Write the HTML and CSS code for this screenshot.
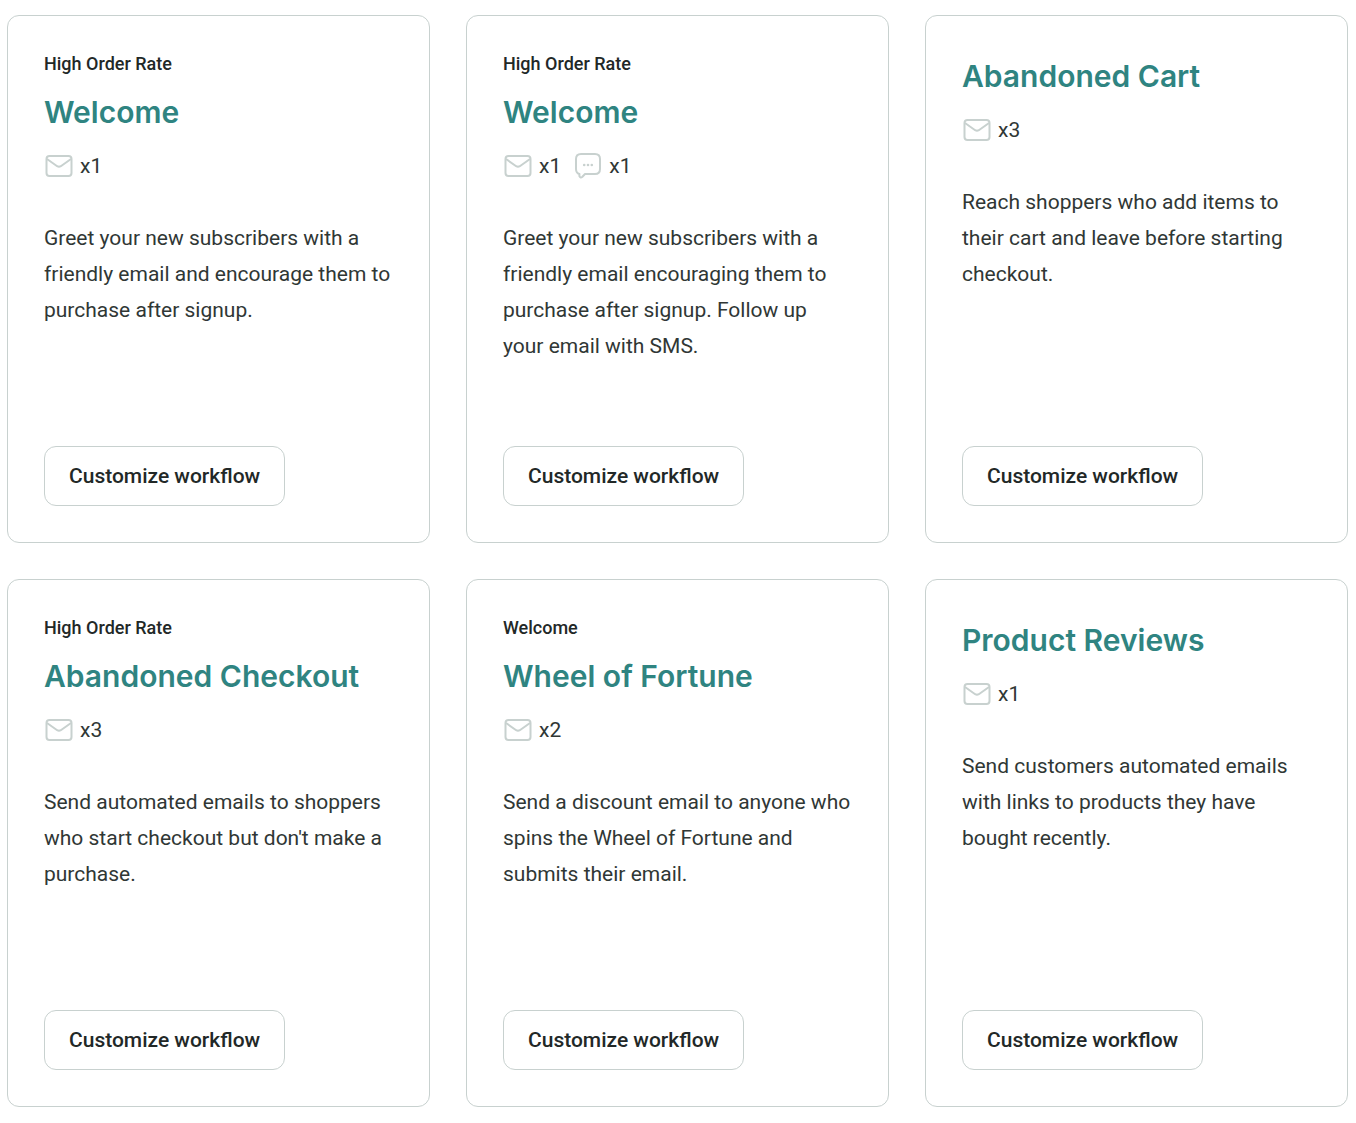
FILE: index.html
```html
<!DOCTYPE html>
<html lang="en">
<head>
    <meta charset="UTF-8">
    <meta name="viewport" content="width=device-width, initial-scale=1.0">
    <title>Workflows</title>
    <link rel="stylesheet" href="styles.css">
</head>
<body>
    <!-- shared icons -->
    <svg class="icon-defs" aria-hidden="true">
        <symbol id="icon-email" viewBox="0 0 30 30">
            <rect x="2.5" y="5" width="25" height="20" rx="3"/>
            <path d="M3 8 L13.2 15.2 Q15 16.4 16.8 15.2 L27 8"/>
        </symbol>
        <symbol id="icon-sms" viewBox="0 0 30 30">
            <path d="M8 3 H22 Q27 3 27 8 V18 Q27 23 22 23 H12 L9.4 25.8 Q7.4 27.6 6.4 25.2 V23 Q3 22 3 18 V8 Q3 3 8 3 Z"/>
            <g class="dots">
                <circle cx="11.2" cy="14" r="1.3"/>
                <circle cx="15" cy="14" r="1.3"/>
                <circle cx="18.8" cy="14" r="1.3"/>
            </g>
        </symbol>
    </svg>

    <main class="workflows">
        <article class="card">
            <div class="tag">High Order Rate</div>
            <h2>Welcome</h2>
            <div class="channels">
                <span class="channel"><svg class="icon" role="img" aria-label="Email"><use href="#icon-email"/></svg>x1</span>
            </div>
            <p>Greet your new subscribers with a friendly email and encourage them to purchase after signup.</p>
            <button type="button">Customize workflow</button>
        </article>

        <article class="card">
            <div class="tag">High Order Rate</div>
            <h2>Welcome</h2>
            <div class="channels">
                <span class="channel"><svg class="icon" role="img" aria-label="Email"><use href="#icon-email"/></svg>x1</span>
                <span class="channel"><svg class="icon" role="img" aria-label="SMS"><use href="#icon-sms"/></svg>x1</span>
            </div>
            <p>Greet your new subscribers with a friendly email encouraging them to purchase after signup. Follow up your email with SMS.</p>
            <button type="button">Customize workflow</button>
        </article>

        <article class="card">
            <h2>Abandoned Cart</h2>
            <div class="channels">
                <span class="channel"><svg class="icon" role="img" aria-label="Email"><use href="#icon-email"/></svg>x3</span>
            </div>
            <p>Reach shoppers who add items to their cart and leave before starting checkout.</p>
            <button type="button">Customize workflow</button>
        </article>

        <article class="card">
            <div class="tag">High Order Rate</div>
            <h2>Abandoned Checkout</h2>
            <div class="channels">
                <span class="channel"><svg class="icon" role="img" aria-label="Email"><use href="#icon-email"/></svg>x3</span>
            </div>
            <p>Send automated emails to shoppers who start checkout but don't make a purchase.</p>
            <button type="button">Customize workflow</button>
        </article>

        <article class="card">
            <div class="tag">Welcome</div>
            <h2>Wheel of Fortune</h2>
            <div class="channels">
                <span class="channel"><svg class="icon" role="img" aria-label="Email"><use href="#icon-email"/></svg>x2</span>
            </div>
            <p>Send a discount email to anyone who spins the Wheel of Fortune and submits their email.</p>
            <button type="button">Customize workflow</button>
        </article>

        <article class="card">
            <h2>Product Reviews</h2>
            <div class="channels">
                <span class="channel"><svg class="icon" role="img" aria-label="Email"><use href="#icon-email"/></svg>x1</span>
            </div>
            <p>Send customers automated emails with links to products they have bought recently.</p>
            <button type="button">Customize workflow</button>
        </article>
    </main>
</body>
</html>
```

FILE: styles.css
```css
* {
    box-sizing: border-box;
}
body {
    margin: 0;
    background-color: #fff;
    color: #222827;
    font-family: Roboto, sans-serif;
    font-size: 21px;
    line-height: 36px;
}
.icon-defs {
    display: none;
}
.workflows {
    display: grid;
    grid-template-columns: repeat(3, 1fr);
    gap: 36px;
    padding: 15px 8px 16px 7px;
}
.card {
    display: flex;
    flex-direction: column;
    align-items: flex-start;
    min-height: 528px;
    padding: 36px;
    border: 1px solid #c8d1cf;
    border-radius: 12px;
}
.tag {
    margin-bottom: 12px;
    font-size: 18px;
    font-weight: 500;
    line-height: 24px;
}
h2 {
    margin: 0 0 12px;
    color: #2f8481;
    font-family: Inter, sans-serif;
    font-size: 30px;
    font-weight: 600;
    line-height: 48px;
}
.channels {
    display: flex;
    gap: 12px;
    margin-bottom: 36px;
    color: #303735;
}
.channel {
    display: flex;
    align-items: center;
    gap: 6px;
}
.icon {
    width: 30px;
    height: 30px;
    fill: none;
    stroke: #c8d1cf;
    stroke-width: 2;
    stroke-linejoin: round;
}
.dots {
    fill: #c8d1cf;
    stroke: none;
}
p {
    margin: 0 0 36px;
    color: #303735;
}
button {
    margin-top: auto;
    padding: 11px 24px;
    border: 1px solid #c8d1cf;
    border-radius: 12px;
    background-color: #fff;
    color: #222827;
    font-family: inherit;
    font-size: 21px;
    font-weight: 500;
    line-height: 36px;
    cursor: pointer;
}
button:hover {
    background-color: #f4f7f6;
}
```
